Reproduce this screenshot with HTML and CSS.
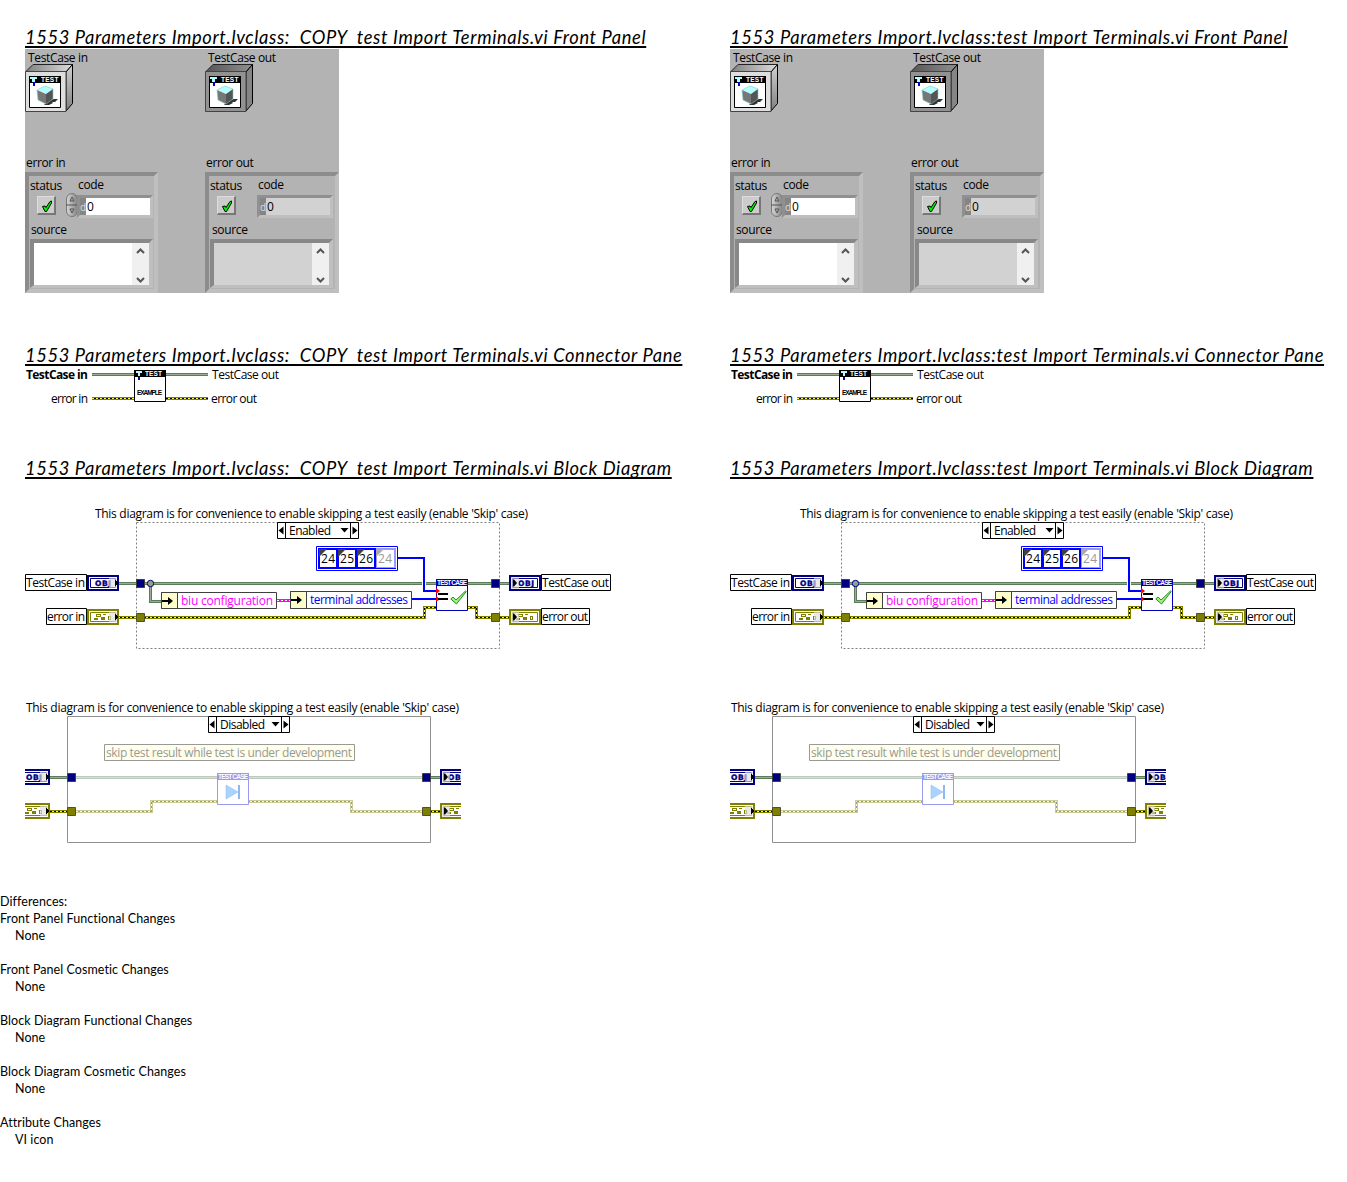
FILE: index.html
```html
<!DOCTYPE html>
<html lang="en">
<head>
<meta charset="utf-8">
<title>VI comparison report</title>
<link rel="stylesheet" href="styles.css">
</head>
<body>
<svg class="defs" width="0" height="0" aria-hidden="true">
  <defs>
    <linearGradient id="side" x1="0" y1="0" x2="0" y2="1"><stop offset="0" stop-color="#d0d0d0"/><stop offset="1" stop-color="#808080"/></linearGradient>
    <linearGradient id="top" x1="0" y1="0" x2="1" y2="0"><stop offset="0" stop-color="#808080"/><stop offset="1" stop-color="#dcdcdc"/></linearGradient>
    <linearGradient id="topDark" x1="0" y1="0" x2="1" y2="0"><stop offset="0" stop-color="#555"/><stop offset="1" stop-color="#909090"/></linearGradient>
    <linearGradient id="knob" x1="0" y1="0" x2="1" y2="0"><stop offset="0" stop-color="#d8d8d8"/><stop offset="1" stop-color="#828282"/></linearGradient>
    <pattern id="hazard" width="4" height="4" patternUnits="userSpaceOnUse"><path fill="#ffff40" d="M0 0h4v4H0z"/><path d="M0 0h2v2H0zM2 2h2v2H2z"/></pattern>
    <symbol id="cube" viewBox="0 0 32 32">
      <path fill="#fff" stroke="#000" d="M.5.5h31v31H.5z"/><path d="M0 0h32v7H0z"/>
      <path fill="#b3ffff" d="M1 1h7v2H6v3H3V3H1z"/><path fill="#00c" d="M4 6h2v4H4z"/>
      <path fill="#333" d="m17 25 8-2h4l-3 3h-3l1 1-4 2h-5l2-2z"/>
      <path fill="#b3ffff" d="m8 14 8-4 8 3-7 5z"/><path fill="#777" d="m8 14 9 4v10l-8-4z"/><path fill="#555" d="m17 18 7-5v10l-7 5z"/>
      <path fill="none" stroke="#7cc" stroke-width=".6" d="m8 14 8-4 8 3v10l-7 5-8-4z"/>
    </symbol>
    <symbol id="obj" viewBox="0 0 32 16">
      <path fill="#fff" stroke="#000080" stroke-width="2" d="M1 1h30v14H1z"/><path fill="none" stroke="#000080" d="M3.500 3.500h25v9h-25z"/>
    </symbol>
    <symbol id="err" viewBox="0 0 32 16">
      <path fill="#fff" stroke="#808000" stroke-width="2" d="M1 1h30v14H1z"/><path fill="none" stroke="#808000" d="M3.500 3.500h25v9h-25z"/>
      <path fill="#808000" d="M9 5h5v3H9zM16 5h3v1h-3zM7 9h4v2H7zM14 8h4v3h-4zM21 7h3v4h-3z"/><path fill="#fff" d="M10 6h3v1h-3zM22 8h1v2h-1z"/>
    </symbol>
    <symbol id="inShade" viewBox="0 0 32 16"><path fill="#ddd" fill-opacity=".65" d="M22 3h8v10h-8z"/><path d="M28 5h1v1h1v1h1v2h-1v1h-1v1h-1z"/></symbol>
    <symbol id="outShade" viewBox="0 0 32 16"><path fill="#ddd" fill-opacity=".65" d="M2 2h8v12H2z"/><path d="M4 4.500h1l3 3.500-3 3.500H4z"/></symbol>
    <symbol id="check" viewBox="0 0 17 15"><path fill="#9df07c" stroke="#259325" d="M.8 9 3 7l3 3 9.500-9 .8.5L6.500 14z"/></symbol>
    <symbol id="tick" viewBox="0 0 20 20"><path fill="#00f000" stroke="#000" d="M4.500 9.500 7 9l1 1.500 4-6 1.500-.5v2l-5 8.500H7z"/></symbol>
  </defs>
</svg>

<main class="report">
  <div class="columns">
    <article class="vi">
      <h2 class="title copy">1553 Parameters Import.lvclass:&nbsp; COPY&nbsp; test Import Terminals.vi Front Panel</h2>
      <section class="panel">
        <div class="side">
          <div class="label case">TestCase in</div>
          <svg class="object" viewBox="0 0 48 48"><path fill="url(#top)" stroke="#222" d="M.5 8 8 .5h39.500L41 8z"/><path fill="url(#side)" stroke="#000" d="m41 8 6.500-7.500v39L41 47z"/><path fill="#dedede" stroke="#444" d="M.5 7.500H41v40H.5z"/><use href="#cube" x="4" y="12" width="32" height="32"/><text class="pix light" x="16" y="18" textLength="17">TEST</text></svg>
          <div class="label error">error in</div>
          <div class="cluster">
            <div class="names"><span class="status">status</span><span>code</span></div>
            <div class="controls"><svg class="button"><use href="#tick" width="20" height="20"/></svg><svg class="spin" viewBox="0 0 12 24"><rect x=".5" y=".5" width="11" height="23" rx="5.500" fill="url(#knob)" stroke="#777"/><path fill="none" stroke="#555" d="M0 12h12M4 8l2-4 2 4zM4 16l2 4 2-4z"/></svg><div class="number"><i>d</i><b>0</b></div></div>
            <div class="source">source</div>
            <div class="text"><svg class="scroll" viewBox="0 0 17 42"><path fill="none" stroke="#555" stroke-width="2" d="m5 10 3.500-3.500L12 10M5 35l3.500 3.500L12 35"/></svg></div>
          </div>
        </div>
        <div class="side out">
          <div class="label case">TestCase out</div>
          <svg class="object" viewBox="0 0 48 48"><path fill="url(#topDark)" stroke="#222" d="M.5 8 8 .5h39.500L41 8z"/><path fill="#858585" stroke="#000" d="m41 8 6.500-7.500v39L41 47z"/><path fill="#929292" stroke="#444" d="M.5 7.500H41v40H.5z"/><use href="#cube" x="4" y="12" width="32" height="32"/><text class="pix light" x="16" y="18" textLength="17">TEST</text></svg>
          <div class="label error">error out</div>
          <div class="cluster">
            <div class="names"><span class="status">status</span><span>code</span></div>
            <div class="controls"><svg class="button"><use href="#tick" width="20" height="20"/></svg><div class="number"><i>d</i><b>0</b></div></div>
            <div class="source">source</div>
            <div class="text"><svg class="scroll" viewBox="0 0 17 42"><path fill="none" stroke="#555" stroke-width="2" d="m5 10 3.500-3.500L12 10M5 35l3.500 3.500L12 35"/></svg></div>
          </div>
        </div>
      </section>

      <h2 class="title copy">1553 Parameters Import.lvclass:&nbsp; COPY&nbsp; test Import Terminals.vi Connector Pane</h2>
      <svg class="connector" viewBox="25 367 300 40">
        <g id="pane"><path class="objwire" d="M92 374.500h116"/><path class="objcore" d="M92 374.500h116"/><path class="errwire" d="M92 398.500h116"/><path class="errcore" stroke="url(#hazard)" d="M92 398.500h116v.01"/>
        <path fill="#fff" stroke="#000" d="M134.500 370.500h31v31h-31z"/><path d="M134 370h32v7h-32z"/><path fill="#b3ffff" d="M136 371h6v2h-2v3h-2v-3h-2z"/><path fill="#00c" d="M138 377h2v3h-2z"/></g>
        <text class="strong" x="26" y="379" textLength="62">TestCase in</text><text x="51" y="403" textLength="37">error in</text>
        <text x="212" y="379" textLength="67">TestCase out</text><text x="211" y="403" textLength="46">error out</text>
        <text class="pix light" x="145" y="376.200" textLength="17">TEST</text><text class="pix" x="137" y="395" textLength="25">EXAMPLE</text>
      </svg>

      <h2 class="title copy">1553 Parameters Import.lvclass:&nbsp; COPY&nbsp; test Import Terminals.vi Block Diagram</h2>
      <svg class="enabled" viewBox="25 500 600 155">
        <g id="diagramOn">
          <path fill="none" stroke="#808080" stroke-dasharray="2 2" d="M136.500 522.500h363v126h-363z"/>
          <path class="objwire" d="M119 583.500h303M426 583.500h83M150.500 583v18.500H162"/><path class="objcore" d="M119 583.500h303M426 583.500h83M150.500 583v18.500H162"/>
          <path class="errwire" d="M119 617.500h305.500v-10H436M468 607.500h8.500v10H509"/><path class="errcore" stroke="url(#hazard)" d="M119 617.500h305.500v-10H436M468 607.500h8.500v10H509"/>
          <path fill="none" stroke="#00f" stroke-width="2" d="M398 558h26v33h12M412 599h25"/>
          <path stroke="#f0f" stroke-width="3" d="M277 600.500h13"/><path stroke="#fff" stroke-dasharray="2 2" d="M277 600.500h13"/>
          <path fill="#000080" stroke="#404040" d="M136.500 579.500h8v8h-8zM491.500 579.500h8v8h-8z"/><path fill="#808000" stroke="#505030" d="M136.500 613.500h8v8h-8zM491.500 613.500h8v8h-8z"/>
          <circle cx="150.500" cy="583.500" r="3.200" fill="#8fa28f" stroke="#000080"/>
          <path fill="#fff" stroke="#000" d="M25.500 574.500h61v16h-61zM46.500 608.500h40v16h-40zM541.500 574.500h69v16h-69zM541.500 608.500h48v16h-48zM277.500 522.500h81v16h-81z"/>
          <path stroke="#000" d="M285.500 522v17M350.500 522v17"/><path d="m278.500 530.500 5-4v8zM357.500 530.500l-5-4v8zM340.500 528h8l-4 4.500z"/>
          <path fill="#fff" stroke="#404040" d="M161.500 592.500h115v16h-115zM290.500 591.500h121v17h-121z"/><path fill="#ffc" stroke="#404040" d="M161.500 592.500h16v16h-16zM290.500 591.500h16v17h-16z"/>
          <path d="M162 600h6v-3l5 4-5 4v-3h-6zM291 599h6v-3l5 4-5 4v-3h-6z"/>
          <path fill="#fff" stroke="#00f" d="M316.500 546.500h81v24h-81z"/><path fill="#00f" d="M318 548h58v21h-58z"/><path fill="#99f" d="M376 548h20v21h-20z"/><path stroke="#00f" d="M318 568.500h78"/>
          <path fill="#fff" d="M320 550h16v17h-16zM339 550h16v17h-16zM358 550h16v17h-16zM377 550h17v17h-17z"/><path fill="#404040" d="M319 549h8l-8 8zM338 549h8l-8 8zM357 549h8l-8 8z"/><path fill="#aaa" d="M376 549h8l-8 8z"/>
          <path fill="#fff" stroke="#00b" d="M436.500 579.500h31v31h-31z"/><path fill="#00b" d="M436 579h32v7h-32z"/>
          <path fill="red" d="m436 588 4 3-4 3zM436 596l4 3-4 3z"/><path d="M438 593h10v2h-10zM438 598h10v2h-10z"/><use href="#check" x="450" y="590" width="17" height="15"/>
          <use href="#obj" x="87" y="575" width="32" height="16"/><use href="#obj" x="509" y="575" width="32" height="16"/>
          <use href="#err" x="87" y="609" width="32" height="16"/><use href="#err" x="509" y="609" width="32" height="16"/>
        </g>
        <text x="95" y="518" textLength="433">This diagram is for convenience to enable skipping a test easily (enable 'Skip' case)</text>
        <text x="289" y="535" textLength="42">Enabled</text>
        <text x="321" y="563" textLength="14">24</text><text x="340" y="563" textLength="14">25</text><text x="359" y="563" textLength="14">26</text><text class="dim" x="378" y="563" textLength="14">24</text>
        <text x="26" y="587" textLength="59">TestCase in</text><text x="47" y="621" textLength="38">error in</text><text x="542" y="587" textLength="67">TestCase out</text><text x="542" y="621" textLength="46">error out</text>
        <text class="pink" x="181" y="605" textLength="92">biu configuration</text><text class="blue" x="310" y="604" textLength="98">terminal addresses</text>
        <text class="pix light" x="437" y="585.200" textLength="30">TEST CASE</text>
        <text class="pix obj" x="95" y="586" textLength="16">OBJ</text><text class="pix obj" x="518" y="586" textLength="16">OBJ</text>
        <g id="shadesOn"><use href="#inShade" x="87" y="575" width="32" height="16"/><use href="#inShade" x="87" y="609" width="32" height="16"/><use href="#outShade" x="509" y="575" width="32" height="16"/><use href="#outShade" x="509" y="609" width="32" height="16"/></g>
      </svg>
      <svg class="disabled" viewBox="25 695 436 150">
        <g id="diagramOff">
          <path fill="none" stroke="#909090" d="M67.500 716.500h363v126h-363z"/>
          <path class="objwire" d="M50 777.500h20M428 777.500h12"/><path class="objcore" d="M50 777.500h20M428 777.500h12"/><path class="errwire" d="M50 811.500h20M428 811.500h12"/><path class="errcore" stroke="url(#hazard)" d="M50 811.500h20M428 811.500h12v.01"/>
          <g opacity=".4"><path class="objwire" d="M76 777.500h346"/><path class="objcore" d="M76 777.500h346"/><path class="errwire" d="M76 811.500h75.500v-10H217M249 801.500h102.500v10H422"/><path class="errcore" stroke="url(#hazard)" d="M76 811.500h75.500v-10H217M249 801.500h102.500v10H422"/></g>
          <path fill="#000080" stroke="#404040" d="M67.500 773.500h8v8h-8zM422.500 773.500h8v8h-8z"/><path fill="#808000" stroke="#505030" d="M67.500 807.500h8v8h-8zM422.500 807.500h8v8h-8z"/>
          <path fill="#fff" stroke="#000" d="M208.500 716.500h81v16h-81z"/><path stroke="#000" d="M216.500 716v17M281.500 716v17"/><path d="m209.500 724.500 5-4v8zM288.500 724.500l-5-4v8zM271.500 722h8l-4 4.500z"/>
          <path fill="#ffffeb" stroke="#999" d="M104.500 744.500h250v16h-250z"/>
          <path fill="#fff" stroke="#99e" d="M217.500 773.500h31v31h-31z"/><path fill="#99e" d="M217 773h32v7h-32z"/><path fill="#a9d3ff" stroke="#8fb8ee" stroke-width=".5" d="m226 785 12 7-12 7z"/><path stroke="#8fb8ee" stroke-width="2" d="M239 785v14"/>
          <use href="#obj" x="18" y="769" width="32" height="16"/><use href="#obj" x="440" y="769" width="32" height="16"/><use href="#err" x="18" y="803" width="32" height="16"/><use href="#err" x="440" y="803" width="32" height="16"/>
        </g>
        <text x="26" y="712" textLength="433">This diagram is for convenience to enable skipping a test easily (enable 'Skip' case)</text>
        <text x="220" y="729" textLength="45">Disabled</text><text class="dim" x="106" y="757" textLength="246">skip test result while test is under development</text>
        <text class="pix light" x="218" y="779.200" textLength="30">TEST CASE</text>
        <text class="pix obj" x="26" y="780" textLength="16">OBJ</text><text class="pix obj" x="448" y="780" textLength="16">OBJ</text>
        <g id="shadesOff"><use href="#inShade" x="18" y="769" width="32" height="16"/><use href="#inShade" x="18" y="803" width="32" height="16"/><use href="#outShade" x="440" y="769" width="32" height="16"/><use href="#outShade" x="440" y="803" width="32" height="16"/></g>
      </svg>
    </article>

    <article class="vi">
      <h2 class="title">1553 Parameters Import.lvclass:test Import Terminals.vi Front Panel</h2>
      <section class="panel">
        <div class="side">
          <div class="label case">TestCase in</div>
          <svg class="object" viewBox="0 0 48 48"><path fill="url(#top)" stroke="#222" d="M.5 8 8 .5h39.500L41 8z"/><path fill="url(#side)" stroke="#000" d="m41 8 6.500-7.500v39L41 47z"/><path fill="#dedede" stroke="#444" d="M.5 7.500H41v40H.5z"/><use href="#cube" x="4" y="12" width="32" height="32"/><text class="pix light" x="16" y="18" textLength="17">TEST</text></svg>
          <div class="label error">error in</div>
          <div class="cluster">
            <div class="names"><span class="status">status</span><span>code</span></div>
            <div class="controls"><svg class="button"><use href="#tick" width="20" height="20"/></svg><svg class="spin" viewBox="0 0 12 24"><rect x=".5" y=".5" width="11" height="23" rx="5.500" fill="url(#knob)" stroke="#777"/><path fill="none" stroke="#555" d="M0 12h12M4 8l2-4 2 4zM4 16l2 4 2-4z"/></svg><div class="number"><i>d</i><b>0</b></div></div>
            <div class="source">source</div>
            <div class="text"><svg class="scroll" viewBox="0 0 17 42"><path fill="none" stroke="#555" stroke-width="2" d="m5 10 3.500-3.500L12 10M5 35l3.500 3.500L12 35"/></svg></div>
          </div>
        </div>
        <div class="side out">
          <div class="label case">TestCase out</div>
          <svg class="object" viewBox="0 0 48 48"><path fill="url(#topDark)" stroke="#222" d="M.5 8 8 .5h39.500L41 8z"/><path fill="#858585" stroke="#000" d="m41 8 6.500-7.500v39L41 47z"/><path fill="#929292" stroke="#444" d="M.5 7.500H41v40H.5z"/><use href="#cube" x="4" y="12" width="32" height="32"/><text class="pix light" x="16" y="18" textLength="17">TEST</text></svg>
          <div class="label error">error out</div>
          <div class="cluster">
            <div class="names"><span class="status">status</span><span>code</span></div>
            <div class="controls"><svg class="button"><use href="#tick" width="20" height="20"/></svg><div class="number"><i>d</i><b>0</b></div></div>
            <div class="source">source</div>
            <div class="text"><svg class="scroll" viewBox="0 0 17 42"><path fill="none" stroke="#555" stroke-width="2" d="m5 10 3.500-3.500L12 10M5 35l3.500 3.500L12 35"/></svg></div>
          </div>
        </div>
      </section>

      <h2 class="title">1553 Parameters Import.lvclass:test Import Terminals.vi Connector Pane</h2>
      <svg class="connector" viewBox="25 367 300 40">
        <use href="#pane"/>
        <text class="strong" x="26" y="379" textLength="62">TestCase in</text><text x="51" y="403" textLength="37">error in</text>
        <text x="212" y="379" textLength="67">TestCase out</text><text x="211" y="403" textLength="46">error out</text>
        <text class="pix light" x="145" y="376.200" textLength="17">TEST</text><text class="pix" x="137" y="395" textLength="25">EXAMPLE</text>
      </svg>

      <h2 class="title">1553 Parameters Import.lvclass:test Import Terminals.vi Block Diagram</h2>
      <svg class="enabled" viewBox="25 500 600 155">
        <use href="#diagramOn"/>
        <text x="95" y="518" textLength="433">This diagram is for convenience to enable skipping a test easily (enable 'Skip' case)</text>
        <text x="289" y="535" textLength="42">Enabled</text>
        <text x="321" y="563" textLength="14">24</text><text x="340" y="563" textLength="14">25</text><text x="359" y="563" textLength="14">26</text><text class="dim" x="378" y="563" textLength="14">24</text>
        <text x="26" y="587" textLength="59">TestCase in</text><text x="47" y="621" textLength="38">error in</text><text x="542" y="587" textLength="67">TestCase out</text><text x="542" y="621" textLength="46">error out</text>
        <text class="pink" x="181" y="605" textLength="92">biu configuration</text><text class="blue" x="310" y="604" textLength="98">terminal addresses</text>
        <text class="pix light" x="437" y="585.200" textLength="30">TEST CASE</text>
        <text class="pix obj" x="95" y="586" textLength="16">OBJ</text><text class="pix obj" x="518" y="586" textLength="16">OBJ</text>
        <use href="#shadesOn"/>
      </svg>
      <svg class="disabled" viewBox="25 695 436 150">
        <use href="#diagramOff"/>
        <text x="26" y="712" textLength="433">This diagram is for convenience to enable skipping a test easily (enable 'Skip' case)</text>
        <text x="220" y="729" textLength="45">Disabled</text><text class="dim" x="106" y="757" textLength="246">skip test result while test is under development</text>
        <text class="pix light" x="218" y="779.200" textLength="30">TEST CASE</text>
        <text class="pix obj" x="26" y="780" textLength="16">OBJ</text><text class="pix obj" x="448" y="780" textLength="16">OBJ</text>
        <use href="#shadesOff"/>
      </svg>
    </article>
  </div>

  <section class="differences">
    <h3>Differences:</h3>
    <dl>
      <dt>Front Panel Functional Changes</dt><dd>None</dd>
      <dt>Front Panel Cosmetic Changes</dt><dd>None</dd>
      <dt>Block Diagram Functional Changes</dt><dd>None</dd>
      <dt>Block Diagram Cosmetic Changes</dt><dd>None</dd>
      <dt>Attribute Changes</dt><dd>VI icon</dd>
    </dl>
  </section>
</main>
</body>
</html>
```
FILE: styles.css
```css
* { box-sizing: border-box; }
body { margin: 0; background: #fff; color: #000; font: 12px/16px "Open Sans", "Noto Sans", sans-serif; }
svg { display: block; }
.defs { height: 0; }
.report { height: 1182px; overflow: hidden; padding-top: 26px; }
.columns { display: grid; grid-template-columns: 705px 1fr; padding-left: 25px; height: 867px; }
.vi { display: flex; flex-direction: column; align-items: flex-start; min-width: 0; }

.title { margin: 0; height: 23px; font: italic 400 18.300px/22px Lato, sans-serif; white-space: nowrap; text-decoration: underline; text-decoration-thickness: 2px; text-underline-offset: 2px; text-decoration-skip-ink: none; letter-spacing: .68px; }
.title.copy { letter-spacing: .63px; }

/* front panel */
.panel { display: grid; grid-template-columns: 180px 134px; width: 314px; height: 244px; background: #b3b3b3; margin-bottom: 51px; }
.side { display: flex; flex-direction: column; align-items: flex-start; letter-spacing: -.35px; }
.label { white-space: nowrap; height: 16px; }
.label.case { padding-left: 3px; height: 15px; line-height: 17px; }
.label.error { padding-left: 1px; margin-top: 43px; height: 17px; }
.object { width: 48px; height: 48px; }
.cluster { width: 133px; height: 121px; border: 4px solid; border-color: #8c8c8c #bfbfbf #bfbfbf #8c8c8c; box-shadow: inset 0 0 0 0 #999; }
.out .cluster { width: 134px; }
.names { display: grid; grid-template-columns: 48px 1fr; height: 18px; padding-left: 1px; line-height: 18px; }
.status { padding-top: 1px; }
.controls { display: flex; align-items: center; height: 24px; padding-left: 8px; }
.button { width: 19px; height: 19px; margin-bottom: 2px; background: #ccc; border: 1px solid; border-color: #ddd #777 #777 #ddd; border-width: 1px 2px 2px 1px; }
.spin { width: 12px; height: 24px; margin: 0 -1px 2px 10px; }
.out .number { margin-left: 21px; }
.number { display: flex; width: 76px; height: 23px; border: 3px solid; border-color: #909090 #bfbfbf #bfbfbf #909090; background: #fff; line-height: 18px; }
.number i { width: 6px; background: #858585; color: #ddd; font-style: normal; font-size: 10px; }
.number b { font-weight: 400; padding-left: 1px; font-size: 12px; }
.source { padding-left: 2px; height: 21px; line-height: 23px; }
.text { display: flex; justify-content: flex-end; width: 123px; height: 49px; margin-left: 1px; border: solid; border-color: #888 #bfbfbf #bfbfbf #888; border-width: 4px 4px 3px 4px; background: #fff; }
.scroll { width: 17px; height: 42px; background: #f0f0f0; }
.out .number, .out .text { background: #d2d2d2; }
.out .source, .out .text { margin-left: 1px; }

/* diagrams */
svg text { font: 12px "Open Sans", "Noto Sans", sans-serif; fill: #000; }
svg text.strong { font-weight: 700; }
svg text.dim { fill: #999; }
svg text.pink { fill: #f0f; }
svg text.blue { fill: #00f; }
svg text.pix { font: 700 6.500px "Liberation Sans", sans-serif; }
svg text.light { fill: #fff; }
svg text.obj { font: 700 7.500px "DejaVu Sans", sans-serif; fill: #000080; stroke: #000080; stroke-width: .4; }
.objwire, .objcore, .errwire, .errcore { fill: none; }
.objwire { stroke: #5b7b5b; stroke-width: 3; }
.objcore { stroke: #98ae90; stroke-width: 1; }
.errwire { stroke: #808000; stroke-width: 3; }
.errcore { stroke-width: 1; }
.connector { width: 300px; height: 40px; margin-bottom: 50px; }
.enabled { width: 600px; height: 155px; margin-top: 20px; }
.disabled { width: 436px; height: 150px; margin-top: 40px; }

.differences { font: 12.5px/17px Lato, sans-serif; letter-spacing: .07px; }
.differences h3 { margin: 0; font: inherit; }
.differences dl { margin: 0; }
.differences dd { margin: 0 0 17px 15px; }
```
